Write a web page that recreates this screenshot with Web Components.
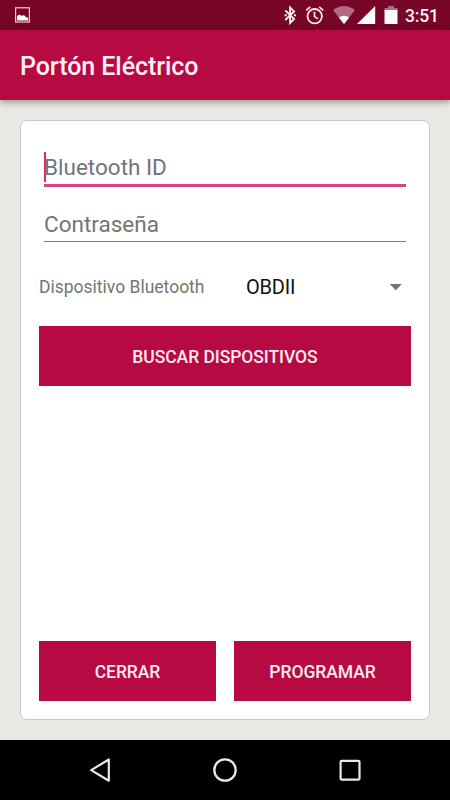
<!DOCTYPE html>
<html lang="es">
<head>
<meta charset="utf-8">
<title>Portón Eléctrico</title>
<style>
html,body{margin:0;height:100%}
body{font-family:Roboto,"Noto Sans",sans-serif;background:#e9eae6;overflow:hidden}
</style>
</head>
<body>
<gate-app></gate-app>
<script>
const define = (name, html) => customElements.define(name, class extends HTMLElement {
  constructor() {
    super();
    const t = document.createElement('template');
    t.innerHTML = html;
    this.attachShadow({ mode: 'open' }).append(t.content.cloneNode(true));
  }
});

define('status-bar', `
<style>
:host{display:flex;height:30px;background:#760528;color:#fdeef2;box-sizing:border-box;padding:0 10px 0 14px;align-items:center}
svg{display:block;flex:none}
.gap{flex:1}
.bt{margin-right:7px}.alarm{margin-right:7.5px}.wifi{margin-right:2px}.cell{margin-right:8px}.bat{margin-right:7.5px}
time{font-size:17.5px;font-weight:500;line-height:30px;padding-top:2px;width:35px;white-space:nowrap;letter-spacing:-.2px}
</style>
<svg width="17" height="30" viewBox="0 0 17 30"><rect x="1.6" y="7.8" width="13.8" height="14.2" fill="none" stroke="#f9cbd0" stroke-width="1.2"/><path d="M3 20.5v-4.2l1.6-1.5h1.6l1.4 1.2 1.4-.8 1.6.4 1.2 1.5 1.6.4.8 1v2z" fill="#fff"/></svg>
<span class="gap"></span>
<svg class="bt" width="14" height="30" viewBox="0 0 14 30" fill="none" stroke="#fdeef2" stroke-width="1.9"><path d="M1.3 10.4l8.8 8.6-4 3.9V7.5l4 3.9L1.3 20"/><path d="M.6 14.2h2.2v2H.6zM9.9 14.2h2v2h-2z" fill="#fdeef2" stroke="none"/></svg>
<svg class="alarm" width="20" height="30" viewBox="0 0 20 30" fill="none" stroke="#fdeef2" stroke-width="1.8"><circle cx="9.7" cy="16.2" r="7.2"/><path d="M9.5 11.8v4.8l3.6 2.3M1.2 10.3l4-3.4M14.2 6.9l4 3.4" stroke-width="1.7"/></svg>
<svg class="wifi" width="22" height="30" viewBox="0 0 22 30"><path d="M0 10Q11 2 22 10L11 24z" fill="#b06a80"/><path d="M5.8 17.4Q11 14 16.2 17.4L11 24z" fill="#fff"/></svg>
<svg class="cell" width="19" height="30" viewBox="0 0 19 30"><path d="M0 24L18.2 6v18z" fill="#fff"/></svg>
<svg class="bat" width="14" height="30" viewBox="0 0 14 30"><path d="M4 6h6v2h3.5v3H.5V8H4z" fill="#b06a80"/><path d="M.5 10h13v14H.5z" fill="#fff"/></svg>
<time>3:51</time>`);

define('app-bar', `
<style>
:host{display:flex;align-items:center;height:70px;padding:2px 20px 0;box-sizing:border-box;background:#b70a42;color:#fff0f5;font-size:25px;font-weight:500;letter-spacing:-.07px;box-shadow:0 2px 5px rgba(0,0,0,.25),0 4px 9px rgba(0,0,0,.12);position:relative;white-space:nowrap}
</style><slot></slot>`);

define('text-field', `
<style>
:host{display:flex;align-items:center;box-sizing:border-box;height:55px;padding-top:20px;margin:0 5px;color:#747474;font-size:22.5px;border-bottom:1px solid #7b7b7b;white-space:nowrap}
:host([focused]){height:40px;padding-top:2px;border-bottom:3px solid #d9467f}
.caret{display:none;width:2px;height:30px;margin-right:-2px;background:#d92d6b}
:host([focused]) .caret{display:block}
</style><span class="caret"></span><slot></slot>`);

define('spinner-row', `
<style>
:host{display:flex;align-items:center;height:48px;color:#757575;font-size:17.5px;white-space:nowrap}
.label{width:207px}
.value{flex:1;color:#111;font-size:20px;letter-spacing:-.2px}
svg{display:block;margin-right:8px}
</style>
<span class="label"><slot name="label"></slot></span><span class="value"><slot></slot></span>
<svg width="14" height="8" viewBox="0 0 14 8"><path d="M.8 1h12L6.8 7.2z" fill="#737373"/></svg>`);

define('flat-button', `
<style>
:host{display:flex;align-items:center;justify-content:center;height:60px;padding-top:1px;box-sizing:border-box;background:#b70a42;color:#ffe9f1;font-size:17.5px;font-weight:500;letter-spacing:-.06px;white-space:nowrap}
</style><slot></slot>`);

define('form-card', `
<style>
:host{display:flex;flex-direction:column;box-sizing:border-box;width:410px;height:600px;background:#fff;border:1px solid #c5c5c7;border-radius:7px;padding:26px 18px 18px}
.fill{flex:1}
.actions{display:grid;grid-template-columns:177px 177px;justify-content:space-between}
</style><slot></slot><span class="fill"></span><div class="actions"><slot name="actions"></slot></div>`);

define('nav-bar', `
<style>
:host{display:flex;justify-content:center;align-items:center;gap:95px;height:60px;background:#000}
svg{display:block}
</style>
<svg width="30" height="30" viewBox="0 0 30 30" fill="none" stroke="#e9e9e9" stroke-width="2.2" stroke-linejoin="round"><path d="M23.8 4.5v21.2L6.2 15.1z"/></svg>
<svg width="30" height="30" viewBox="0 0 30 30" fill="none" stroke="#e9e9e9" stroke-width="2.3"><circle cx="15" cy="15" r="10.7"/></svg>
<svg width="30" height="30" viewBox="0 0 30 30" fill="none" stroke="#e9e9e9" stroke-width="2.2"><rect x="5.6" y="5.9" width="18.9" height="18.7" rx="1"/></svg>`);

define('gate-app', `
<style>
:host{display:flex;flex-direction:column;width:450px;height:800px;background:#e9eae6}
main{flex:1;display:flex;justify-content:center;align-items:flex-start;padding-top:20px;box-sizing:border-box}
spinner-row{margin-top:21px}
.search{margin-top:15px}
</style>
<status-bar></status-bar>
<app-bar>Portón Eléctrico</app-bar>
<main><form-card>
<text-field focused>Bluetooth ID</text-field>
<text-field>Contraseña</text-field>
<spinner-row><span slot="label">Dispositivo Bluetooth</span>OBDII</spinner-row>
<flat-button class="search">BUSCAR DISPOSITIVOS</flat-button>
<flat-button slot="actions">CERRAR</flat-button>
<flat-button slot="actions">PROGRAMAR</flat-button>
</form-card></main>
<nav-bar></nav-bar>`);
</script>
</body>
</html>
